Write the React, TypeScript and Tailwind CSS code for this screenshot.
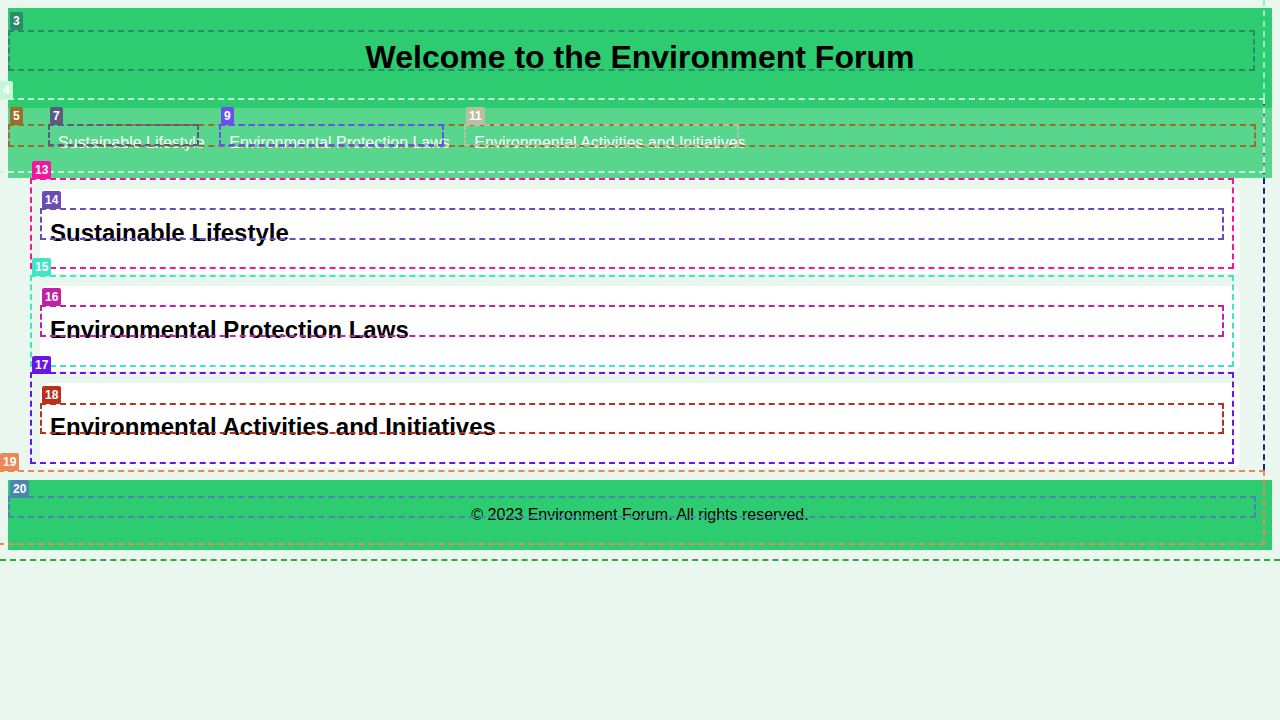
import React from "react";

type Ov = { n: string; box: string; label: string };

const overlays: Ov[] = [
  { n: "3", box: "left-[8px] top-[30px] w-[1247px] h-[41px] border-[#2b8a6a]", label: "left-[10px] top-[12px] bg-[#2b8a6a]" },
  { n: "4", box: "left-[-2px] top-[98px] w-[1267px] h-[75px] border-[#c2f7d8]", label: "left-[0px] top-[81px] bg-[#c2f7d8]" },
  { n: "5", box: "left-[8px] top-[124px] w-[1248px] h-[23px] border-[#9b6f2a]", label: "left-[10px] top-[107px] bg-[#9b6f2a]" },
  { n: "7", box: "left-[48px] top-[124px] w-[151px] h-[22px] border-[#5e5a7f]", label: "left-[50px] top-[107px] bg-[#5e5a7f]" },
  { n: "9", box: "left-[219px] top-[124px] w-[225px] h-[22px] border-[#6b4ff0]", label: "left-[221px] top-[107px] bg-[#6b4ff0]" },
  { n: "11", box: "left-[464px] top-[124px] w-[275px] h-[22px] border-[#bcbea2]", label: "left-[466px] top-[107px] bg-[#bcbea2]" },
  { n: "13", box: "left-[30px] top-[178px] w-[1204px] h-[91px] border-[#f2179e]", label: "left-[32px] top-[161px] bg-[#f2179e]" },
  { n: "14", box: "left-[40px] top-[208px] w-[1184px] h-[32px] border-[#6d4bb4]", label: "left-[42px] top-[191px] bg-[#6d4bb4]" },
  { n: "15", box: "left-[30px] top-[275px] w-[1204px] h-[92px] border-[#3fe6c6]", label: "left-[32px] top-[258px] bg-[#3fe6c6]" },
  { n: "16", box: "left-[40px] top-[305px] w-[1184px] h-[32px] border-[#c51fa5]", label: "left-[42px] top-[288px] bg-[#c51fa5]" },
  { n: "17", box: "left-[30px] top-[372px] w-[1204px] h-[92px] border-[#6a15e6]", label: "left-[32px] top-[356px] bg-[#6a15e6]" },
  { n: "18", box: "left-[40px] top-[403px] w-[1184px] h-[31px] border-[#b8311a]", label: "left-[42px] top-[386px] bg-[#b8311a]" },
  { n: "19", box: "left-[-2px] top-[470px] w-[1267px] h-[75px] border-[#ec8758]", label: "left-[0px] top-[453px] bg-[#ec8758]" },
  { n: "20", box: "left-[8px] top-[496px] w-[1248px] h-[22px] border-[#4b86b1]", label: "left-[10px] top-[480px] bg-[#4b86b1]" },
];

const navItems = [
  "Sustainable Lifestyle",
  "Environmental Protection Laws",
  "Environmental Activities and Initiatives",
];

export default function App() {
  return (
    <div className="relative min-h-screen bg-[#e9f7ee] p-2 font-['Liberation_Sans',Arial,sans-serif] text-black">
      <header className="bg-[#2ecc71] py-[10px]">
        <h1 className="my-[21.44px] text-center text-[32px] font-bold leading-[normal]">
          Welcome to the Environment Forum
        </h1>
      </header>
      <nav className="bg-[#58d68d] py-[10px]">
        <ul className="my-4 flex gap-[4.5px] pl-[40px] text-[16px] leading-[normal]">
          {navItems.map((t) => (
            <li key={t}>
              <a className="px-[10px] text-white">{t}</a>
            </li>
          ))}
        </ul>
      </nav>
      <main className="flex flex-col gap-3 px-8 pt-[11px] pb-[12px]">
        {navItems.map((t) => (
          <section key={t} className="rounded-lg bg-white px-[10px] pt-[30px] pb-[27px]">
            <h2 className="m-0 text-[24px] font-bold leading-[normal]">{t}</h2>
          </section>
        ))}
      </main>
      <footer className="bg-[#2ecc71] py-[10px]">
        <p className="my-4 text-center text-[16px] leading-[normal]">
          © 2023 Environment Forum. All rights reserved.
        </p>
      </footer>

      {/* debug overlays */}
      <div className="pointer-events-none absolute left-[1263px] top-0 h-[99px] border-l-2 border-dashed border-[#8ff0c8]" />
      <div className="pointer-events-none absolute left-[1263px] top-[99px] h-[371px] border-l-2 border-dashed border-[#1c2482]" />
      <div className="pointer-events-none absolute left-0 top-[559px] w-[1280px] border-t-2 border-dashed border-[#2eaa3a]" />
      {overlays.map((o) => (
        <React.Fragment key={o.n}>
          <div className={"pointer-events-none absolute border-2 border-dashed " + o.box} />
          <div
            className={
              "pointer-events-none absolute h-[18px] rounded-[2px] px-[3px] text-[12px] font-bold leading-[18px] text-white " +
              o.label
            }
          >
            {o.n}
          </div>
        </React.Fragment>
      ))}
    </div>
  );
}
